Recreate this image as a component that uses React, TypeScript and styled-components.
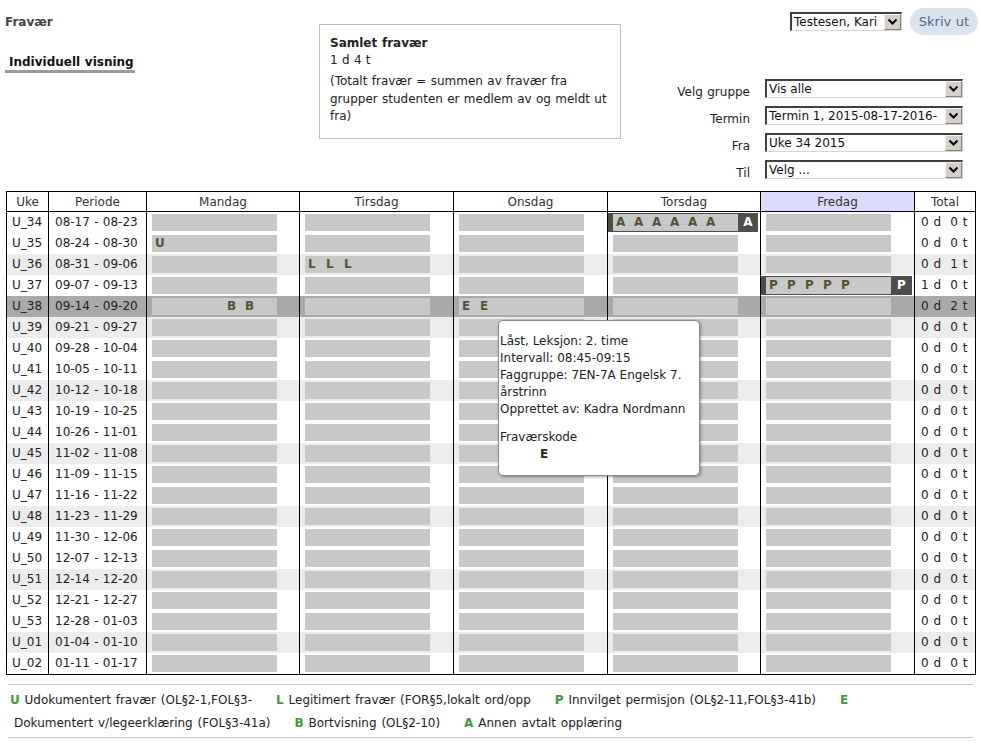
import React from 'react';
import styled, { createGlobalStyle } from 'styled-components';

const FONT = `"DejaVu Sans", Verdana, sans-serif`;

const Global = createGlobalStyle`
  html, body { margin: 0; padding: 0; background: #fff; }
  body { font-family: ${FONT}; font-size: 12px; color: #222; word-spacing: 0.5px; }
  * { box-sizing: border-box; }
`;

const Page = styled.div`
  position: relative;
  width: 981px;
  height: 746px;
  overflow: hidden;
`;

const Top = styled.div`
  display: flex;
  height: 191px;
`;

const LeftCol = styled.div`
  width: 319px;
  flex: none;
  padding-left: 5px;
`;

const Title = styled.div`
  margin-top: 14px;
  font-weight: bold;
  font-size: 12px;
  line-height: 16px;
  color: #444;
`;

const Tab = styled.div`
  display: inline-block;
  margin-top: 25px;
  padding: 0 1px 0 4px;
  font-weight: bold;
  font-size: 12px;
  line-height: 15px;
  color: #111;
  border-bottom: 3px solid #9a9a9a;
`;

const SummaryBox = styled.div`
  margin-top: 24px;
  width: 302px;
  height: 115px;
  flex: none;
  border: 1px solid #bdbdbd;
  padding: 10px 10px;
  line-height: 17px;
  color: #222;
`;

const SummaryTitle = styled.div`
  font-weight: bold;
`;

const SummaryNote = styled.div`
  margin-top: 4px;
  line-height: 17.5px;
`;

const RightCol = styled.div`
  flex: 1;
  display: flex;
  flex-direction: column;
  align-items: flex-end;
`;

const TopRow = styled.div`
  display: flex;
  align-items: center;
  gap: 8px;
  margin-top: 8px;
  margin-right: 3px;
`;

const SelectBox = styled.div<{ $w: number }>`
  display: flex;
  align-items: center;
  width: ${p => p.$w}px;
  height: 19px;
  background: #fff;
  border-style: solid;
  border-width: 2px 1px 1px 2px;
  border-color: #404040 #d4d4d4 #d4d4d4 #404040;
  overflow: hidden;
`;

const SelectText = styled.div`
  flex: 1;
  min-width: 0;
  padding-left: 2px;
  white-space: nowrap;
  overflow: hidden;
  font-size: 12px;
  line-height: 16px;
  color: #111;
  word-spacing: 0;
`;

const SelectArrow = styled.div`
  flex: none;
  width: 17px;
  height: 16px;
  display: flex;
  align-items: center;
  justify-content: center;
  background: #d4d0c8;
  border-style: solid;
  border-width: 1px;
  border-color: #f4f4f4 #808080 #808080 #f4f4f4;
`;

const PrintButton = styled.div`
  width: 68px;
  height: 27px;
  border-radius: 14px;
  background: #dbe3ee;
  color: #4a6a8f;
  font-size: 13px;
  display: flex;
  align-items: center;
  justify-content: center;
`;

const Filters = styled.div`
  margin-top: 44px;
  margin-right: 18px;
  display: grid;
  grid-template-columns: auto 198px;
  column-gap: 15px;
  row-gap: 8px;
`;

const FilterLabel = styled.div`
  height: 19px;
  text-align: right;
  padding-top: 5px;
  font-size: 12px;
  line-height: 16px;
  color: #222;
  white-space: nowrap;
`;

const TableWrap = styled.div`
  margin: 0 6px;
`;

const Table = styled.table`
  width: 970px;
  border-collapse: collapse;
  table-layout: fixed;
  border: 1px solid #000;
`;

const Th = styled.th<{ $active?: boolean }>`
  height: 20px;
  padding: 0;
  border: 1px solid #000;
  font-weight: normal;
  font-size: 12px;
  color: #333;
  text-align: center;
  background: ${p => (p.$active ? '#dcdcfa' : '#fff')};
`;

const Tr = styled.tr<{ $alt?: boolean; $hover?: boolean }>`
  background: ${p => (p.$hover ? '#a9a9a9' : p.$alt ? '#ececec' : '#fff')};
`;

const Td = styled.td<{ $pad?: number }>`
  height: 21px;
  padding: 0 0 0 ${p => p.$pad ?? 0}px;
  border-left: 1px solid #000;
  border-right: 1px solid #000;
  white-space: nowrap;
  overflow: hidden;
  font-size: 12px;
  line-height: 21px;
  color: #222;
  vertical-align: middle;
`;

const TotalText = styled.span`
  letter-spacing: 0.5px;
  word-spacing: 0;
  white-space: pre;
`;

const DayBox = styled.div<{ $flag?: boolean }>`
  display: flex;
  align-items: center;
  height: 19px;
  margin: 1px 2px 1px 0;
  padding-left: 5px;
  background: ${p => (p.$flag ? '#4d4d4d' : 'transparent')};
`;

const Bar = styled.div`
  flex: none;
  width: 125px;
  height: 17px;
  background: #c8c8c8;
  display: flex;
  align-items: center;
  padding-left: 3px;
`;

const Slot = styled.span`
  flex: none;
  width: 18px;
  font-weight: bold;
  font-size: 12px;
  line-height: 17px;
  color: #5a4f36;
`;

const Flag = styled.span`
  flex: 1;
  text-align: center;
  font-weight: bold;
  font-size: 12px;
  color: #fff;
`;

const Tooltip = styled.div`
  position: absolute;
  left: 498px;
  top: 320px;
  width: 202px;
  height: 156px;
  background: #fff;
  border: 1px solid #8a8a8a;
  border-radius: 5px;
  box-shadow: 1px 1px 3px rgba(0, 0, 0, 0.35);
  padding: 12px 1px 0 1px;
  font-size: 12px;
  line-height: 17px;
  color: #222;
  word-spacing: 0;
`;

const TipGap = styled.div`
  height: 11px;
`;

const TipCode = styled.div`
  padding-left: 40px;
  font-weight: bold;
`;

const Legend = styled.div`
  margin: 9px 8px 0 8px;
  border-top: 1px solid #c8c8c8;
  border-bottom: 1px solid #c8c8c8;
  padding: 4px 0 2px 0;
`;

const LegendRow = styled.div<{ $indent: number }>`
  display: flex;
  gap: 24px;
  height: 23px;
  line-height: 23px;
  padding-left: ${p => p.$indent}px;
  white-space: nowrap;
  font-size: 12px;
  word-spacing: 1px;
  color: #222;
`;

const Code = styled.span`
  color: #3d9b3d;
  font-weight: bold;
`;

const Chevron = () => (
  <svg width="11" height="8" viewBox="0 0 11 8">
    <path d="M1.5 1.5 L5.5 5.5 L9.5 1.5" fill="none" stroke="#000" strokeWidth="2" />
  </svg>
);

const FakeSelect = ({ w, text }: { w: number; text: string }) => (
  <SelectBox $w={w}>
    <SelectText>{text}</SelectText>
    <SelectArrow>
      <Chevron />
    </SelectArrow>
  </SelectBox>
);

type DayMarks = { slots?: Record<number, string>; flag?: string };
type Week = { uke: string; periode: string; total: [string, string]; days?: Record<number, DayMarks> };

const weeks: Week[] = [
  { uke: 'U_34', periode: '08-17 - 08-23', total: ['0 d', '0 t'], days: { 3: { slots: { 0: 'A', 1: 'A', 2: 'A', 3: 'A', 4: 'A', 5: 'A' }, flag: 'A' } } },
  { uke: 'U_35', periode: '08-24 - 08-30', total: ['0 d', '0 t'], days: { 0: { slots: { 0: 'U' } } } },
  { uke: 'U_36', periode: '08-31 - 09-06', total: ['0 d', '1 t'], days: { 1: { slots: { 0: 'L', 1: 'L', 2: 'L' } } } },
  { uke: 'U_37', periode: '09-07 - 09-13', total: ['1 d', '0 t'], days: { 4: { slots: { 0: 'P', 1: 'P', 2: 'P', 3: 'P', 4: 'P' }, flag: 'P' } } },
  { uke: 'U_38', periode: '09-14 - 09-20', total: ['0 d', '2 t'], days: { 0: { slots: { 4: 'B', 5: 'B' } }, 2: { slots: { 0: 'E', 1: 'E' } } } },
  { uke: 'U_39', periode: '09-21 - 09-27', total: ['0 d', '0 t'] },
  { uke: 'U_40', periode: '09-28 - 10-04', total: ['0 d', '0 t'] },
  { uke: 'U_41', periode: '10-05 - 10-11', total: ['0 d', '0 t'] },
  { uke: 'U_42', periode: '10-12 - 10-18', total: ['0 d', '0 t'] },
  { uke: 'U_43', periode: '10-19 - 10-25', total: ['0 d', '0 t'] },
  { uke: 'U_44', periode: '10-26 - 11-01', total: ['0 d', '0 t'] },
  { uke: 'U_45', periode: '11-02 - 11-08', total: ['0 d', '0 t'] },
  { uke: 'U_46', periode: '11-09 - 11-15', total: ['0 d', '0 t'] },
  { uke: 'U_47', periode: '11-16 - 11-22', total: ['0 d', '0 t'] },
  { uke: 'U_48', periode: '11-23 - 11-29', total: ['0 d', '0 t'] },
  { uke: 'U_49', periode: '11-30 - 12-06', total: ['0 d', '0 t'] },
  { uke: 'U_50', periode: '12-07 - 12-13', total: ['0 d', '0 t'] },
  { uke: 'U_51', periode: '12-14 - 12-20', total: ['0 d', '0 t'] },
  { uke: 'U_52', periode: '12-21 - 12-27', total: ['0 d', '0 t'] },
  { uke: 'U_53', periode: '12-28 - 01-03', total: ['0 d', '0 t'] },
  { uke: 'U_01', periode: '01-04 - 01-10', total: ['0 d', '0 t'] },
  { uke: 'U_02', periode: '01-11 - 01-17', total: ['0 d', '0 t'] },
];

const dayNames = ['Mandag', 'Tirsdag', 'Onsdag', 'Torsdag', 'Fredag'];
const colWidths = [42, 98, 153, 154, 154, 153, 154, 61];

const DayCell = ({ marks }: { marks?: DayMarks }) => (
  <Td>
    <DayBox $flag={!!marks?.flag}>
      <Bar>
        {[0, 1, 2, 3, 4, 5].map(i => (
          <Slot key={i}>{marks?.slots?.[i] ?? ''}</Slot>
        ))}
      </Bar>
      {marks?.flag && <Flag>{marks.flag}</Flag>}
    </DayBox>
  </Td>
);

export default function App() {
  return (
    <Page>
      <Global />
      <Top>
        <LeftCol>
          <Title>Fravær</Title>
          <Tab>Individuell visning</Tab>
        </LeftCol>
        <SummaryBox>
          <SummaryTitle>Samlet fravær</SummaryTitle>
          <div>1 d 4 t</div>
          <SummaryNote>
            (Totalt fravær = summen av fravær fra grupper studenten er medlem av og meldt ut fra)
          </SummaryNote>
        </SummaryBox>
        <RightCol>
          <TopRow>
            <FakeSelect w={112} text="Testesen, Kari" />
            <PrintButton>Skriv ut</PrintButton>
          </TopRow>
          <Filters>
            <FilterLabel>Velg gruppe</FilterLabel>
            <FakeSelect w={198} text="Vis alle" />
            <FilterLabel>Termin</FilterLabel>
            <FakeSelect w={198} text="Termin 1, 2015-08-17-2016-" />
            <FilterLabel>Fra</FilterLabel>
            <FakeSelect w={198} text="Uke 34 2015" />
            <FilterLabel>Til</FilterLabel>
            <FakeSelect w={198} text="Velg ..." />
          </Filters>
        </RightCol>
      </Top>

      <TableWrap>
        <Table>
          <colgroup>
            {colWidths.map((w, i) => (
              <col key={i} style={{ width: w }} />
            ))}
          </colgroup>
          <thead>
            <tr>
              <Th>Uke</Th>
              <Th>Periode</Th>
              {dayNames.map(d => (
                <Th key={d} $active={d === 'Fredag'}>
                  {d}
                </Th>
              ))}
              <Th>Total</Th>
            </tr>
          </thead>
          <tbody>
            {weeks.map((w, i) => (
              <Tr key={w.uke} $alt={i % 3 === 2} $hover={w.uke === 'U_38'}>
                <Td $pad={5}>{w.uke}</Td>
                <Td $pad={6}>{w.periode}</Td>
                {[0, 1, 2, 3, 4].map(d => (
                  <DayCell key={d} marks={w.days?.[d]} />
                ))}
                <Td $pad={6}>
                  <TotalText>{`${w.total[0]}  ${w.total[1]}`}</TotalText>
                </Td>
              </Tr>
            ))}
          </tbody>
        </Table>
      </TableWrap>

      <Legend>
        <LegendRow $indent={2}>
          <span>
            <Code>U</Code> Udokumentert fravær (OL§2-1,FOL§3-
          </span>
          <span>
            <Code>L</Code> Legitimert fravær (FOR§5,lokalt ord/opp
          </span>
          <span>
            <Code>P</Code> Innvilget permisjon (OL§2-11,FOL§3-41b)
          </span>
          <span>
            <Code>E</Code>
          </span>
        </LegendRow>
        <LegendRow $indent={6}>
          <span>Dokumentert v/legeerklæring (FOL§3-41a)</span>
          <span>
            <Code>B</Code> Bortvisning (OL§2-10)
          </span>
          <span>
            <Code>A</Code> Annen avtalt opplæring
          </span>
        </LegendRow>
      </Legend>

      <Tooltip>
        <div>Låst, Leksjon: 2. time</div>
        <div>Intervall: 08:45-09:15</div>
        <div>Faggruppe: 7EN-7A Engelsk 7. årstrinn</div>
        <div>Opprettet av: Kadra Nordmann</div>
        <TipGap />
        <div>Fraværskode</div>
        <TipCode>E</TipCode>
      </Tooltip>
    </Page>
  );
}
